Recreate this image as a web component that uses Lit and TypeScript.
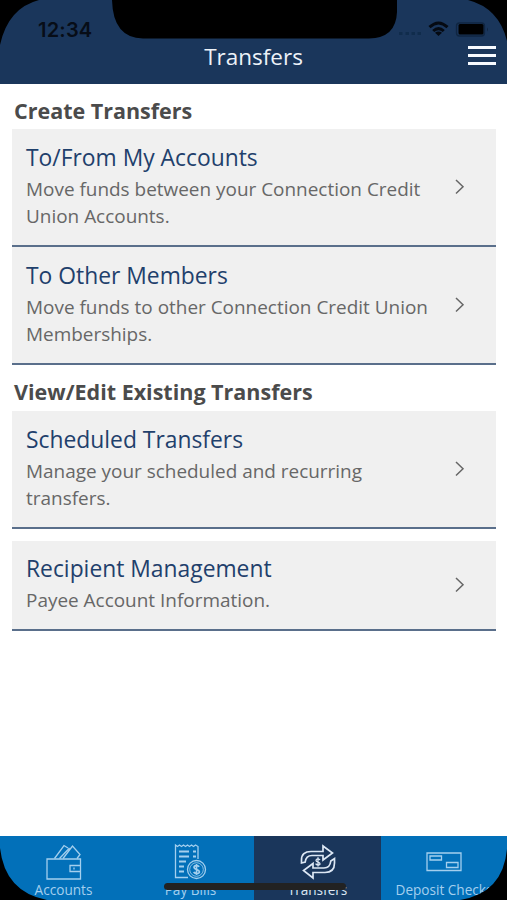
import { LitElement, html, css, svg } from "lit";
import { customElement } from "lit/decorators.js";
import { classMap } from "lit/directives/class-map.js";

const sections = [
  {
    heading: "Create Transfers",
    items: [
      { title: "To/From My Accounts", lines: ["Move funds between your Connection Credit", "Union Accounts."], gap: false },
      { title: "To Other Members", lines: ["Move funds to other Connection Credit Union", "Memberships."], gap: false },
    ],
  },
  {
    heading: "View/Edit Existing Transfers",
    items: [
      { title: "Scheduled Transfers", lines: ["Manage your scheduled and recurring", "transfers."], gap: false },
      { title: "Recipient Management", lines: ["Payee Account Information."], gap: true },
    ],
  },
];

const wallet = svg`
  <path d="M3 16H36.500V36H3Z M36.500 22.500H26V28.500H36.500 M30 24.500V26.500"/>
  <path d="M10.500 15.500 20 2.500 24 5 M15.500 15.500 25.500 5 M19 15.500 28.500 3 36 11.500 33 15.500"/>`;
const bill = svg`
  <path d="M17 34.500H4.500V2l2 1.500 2-1.500 2 1.500 2-1.500 2 1.500 2-1.500 2 1.500 2-1.500 2 1.500 2-1.500 2.500 1.500V16"/>
  <path stroke-width="1.800" d="M8 8.500H18M22 8.500H25M8 13.500H18M22 13.500H25M8 18.500H15M8 23.500H13M8 28.500H13"/>
  <circle cx="25.500" cy="26.500" r="9"/><circle cx="25.500" cy="26.500" r="6.800" stroke-width=".8"/>
  <path stroke-width="1.700" d="M28.200 23.800C27 22 23 22.200 23 24.500S28.400 26.400 28.400 28.800 24 30.900 22.600 29M25.500 21V32"/>`;
const swap = svg`
  <path stroke-width="1.700" d="M3.500 20V17Q3.500 8.500 13 8.500H25V3L34.500 10 25 17V12.500H14Q8 12.500 7.200 19Z"/>
  <path stroke-width="1.700" d="M36.500 15.500V20Q36.500 29.500 27 29.500H15V35L5.500 27.500 15 20.500V25H26Q32 25 32.800 18Z"/>
  <path stroke-width="1.300" d="M22 17C21 15.200 18 15.500 18 17.500S22 18.700 22 20.700 18.500 22.200 17.600 20.700M20 14.200V23.500"/>`;
const check = svg`
  <path d="M3 10H37V27.500H3Z"/>
  <path stroke-width="1.300" d="M6 13H17.500V17H6Z M22.500 19.500H34V24.500H22.500Z"/>`;

const tabs = [
  { label: "Accounts", icon: wallet, active: false },
  { label: "Pay Bills", icon: bill, active: false },
  { label: "Transfers", icon: swap, active: true },
  { label: "Deposit Checks", icon: check, active: false },
];

@customElement("app-root")
export class AppRoot extends LitElement {
  static styles = css`
    :host {
      display: block;
      height: 900px;
      background: #000;
      font-family: "Open Sans", "Noto Sans", sans-serif;
    }
    .screen {
      position: relative;
      display: flex;
      flex-direction: column;
      height: 900px;
      overflow: hidden;
      background: #fff;
    }
    header { height: 84px; background: #1a365b; flex: none; }
    .status {
      display: flex;
      height: 41px;
      align-items: flex-start;
      justify-content: space-between;
    }
    .time {
      margin: 18px 0 0 38px;
      font: 600 20px/25px Inter, sans-serif;
      letter-spacing: 0.2px;
      color: #070d17;
    }
    .signals { width: 117px; height: 30px; margin-top: 15px; }
    .bar {
      display: grid;
      grid-template-columns: 1fr auto 1fr;
      align-items: center;
      height: 32px;
      color: #edf2f8;
    }
    .bar h1 { grid-column: 2; margin: 0; font-size: 22.5px; font-weight: 400; line-height: 32px; }
    .menu { justify-self: end; margin: 0 11px 4px 0; display: grid; gap: 5px; width: 28px; }
    .menu i { height: 3px; background: #f7faff; }
    main { flex: 1; padding: 0 11px 0 12px; }
    h2 {
      margin: 0;
      padding: 12px 0 3px 2px;
      font-size: 21.5px;
      line-height: 30px;
      font-weight: 700;
      color: #4b4b4b;
      white-space: nowrap;
    }
    section + section h2 { padding-bottom: 4px; }
    .item {
      display: flex;
      align-items: center;
      justify-content: space-between;
      box-sizing: border-box;
      height: 118px;
      padding: 0 29px 3px 14px;
      background: #f0f0f0;
      border-bottom: 2px solid #5a6f8b;
    }
    .item.gap { margin-top: 12px; height: 90px; }
    .copy { padding-top: 2px; }
    h3 { margin: -2px 0 2px; font-size: 22.85px; line-height: 32px; font-weight: 400; color: #1f406c; white-space: nowrap; }
    p { margin: 0; font-size: 18.95px; line-height: 27px; color: #676767; white-space: nowrap; }
    .chevron { flex: none; width: 14px; height: 18px; }
    nav { display: grid; grid-template-columns: 127px 127px 127px 126px; height: 64px; flex: none; background: #0270b9; }
    .tab {
      display: flex;
      flex-direction: column;
      align-items: center;
      padding-top: 7px;
      font-size: 13.6px;
      line-height: 19px;
      color: #a4cfee;
      white-space: nowrap;
    }
    .tab.active { background: #1a365b; color: #dce7f4; }
    .tab svg { width: 40px; height: 37px; flex: none; }
    .frame { position: absolute; inset: 0; width: 507px; height: 900px; }
  `;

  render() {
    return html`
      <div class="screen">
        <header>
          <div class="status">
            <div class="time">12:34</div>
            <svg class="signals" viewBox="390 15 117 30">
              <g fill="#102c4c"><rect x="399" y="32" width="3.500" height="3"/><rect x="405.500" y="32" width="3.500" height="3"/><rect x="411.500" y="32" width="3.500" height="3"/><rect x="417.500" y="32" width="3.500" height="3"/></g>
              <g fill="none" stroke="#050a12" stroke-width="3"><path d="M429.500 27.200Q438.500 18.800 447.500 27.200M433.200 31Q438.500 26.200 443.800 31"/></g>
              <path d="M435 32.800Q438.500 30 442 32.800L438.500 36Z" fill="#050a12"/>
              <rect x="456.500" y="23" width="28" height="13" rx="3" fill="none" stroke="#102642" stroke-width="1.300"/>
              <rect x="458.500" y="24" width="25" height="10.500" rx="1.500" fill="#000"/>
              <path d="M487 27.500Q489 29.500 487 31.500Z" fill="#102642"/>
            </svg>
          </div>
          <div class="bar"><h1>Transfers</h1><div class="menu"><i></i><i></i><i></i></div></div>
        </header>
        <main>
          ${sections.map((s) => html`
            <section>
              <h2>${s.heading}</h2>
              ${s.items.map((it) => html`
                <div class=${classMap({ item: true, gap: it.gap })}>
                  <div class="copy"><h3>${it.title}</h3>${it.lines.map((l) => html`<p>${l}</p>`)}</div>
                  <svg class="chevron" viewBox="0 0 14 18"><path d="M3 3 10 9.800 3 16.500" fill="none" stroke="#666" stroke-width="1.500"/></svg>
                </div>`)}
            </section>`)}
        </main>
        <nav>
          ${tabs.map((t) => html`
            <div class=${classMap({ tab: true, active: t.active })}>
              <svg viewBox="0 0 40 37" fill="none" stroke="currentColor" stroke-width="1.300">${t.icon}</svg>
              <span>${t.label}</span>
            </div>`)}
        </nav>
        <svg class="frame" viewBox="0 0 507 900">
          <path d="M0 0H39Q8 8 0 45Z M507 0H468Q499 8 507 41Z M112 0Q113 38 143 38.500H369Q396 38 397 12V0Z"/>
          <path d="M0 848Q5 892 47 900H0Z M507 849Q503 893 460 900H507Z"/>
          <rect x="164" y="883" width="182" height="7" rx="3.500" fill="#222"/>
        </svg>
      </div>`;
  }
}
